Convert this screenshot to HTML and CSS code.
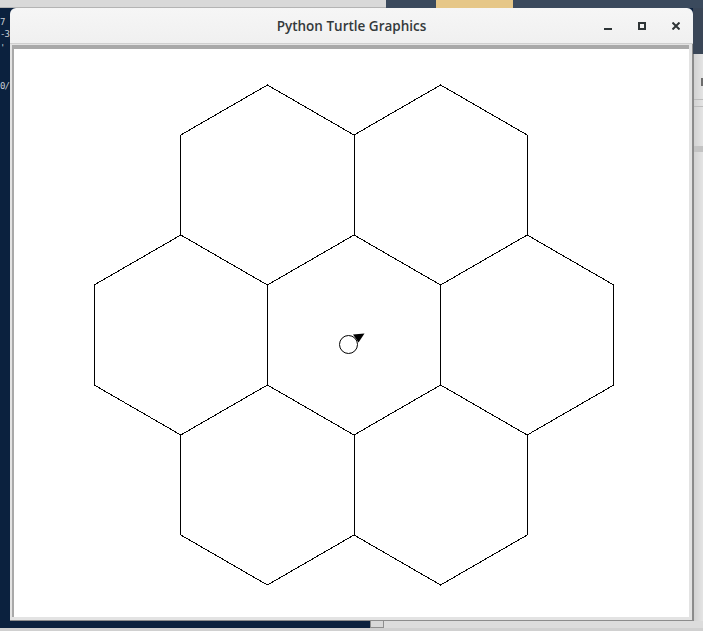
FILE: index.html
```html
<!DOCTYPE html>
<html>
<head>
<meta charset="utf-8">
<title>Python Turtle Graphics</title>
<link rel="stylesheet" href="styles.css">
</head>
<body>
<div class="desktop">
  <div class="topbar">
    <div class="topbar-gray"></div>
    <div class="topbar-slate"></div>
    <div class="topbar-tab"></div>
    <div class="topbar-slate grow"></div>
  </div>
  <div class="terminal">
    <span class="frag f1">7</span>
    <span class="frag f2">-3</span>
    <span class="frag f3">'</span>
    <span class="frag f4">0/</span>
  </div>
  <div class="behind">
    <div class="behind-top"></div>
    <div class="behind-body">
      <div class="b-mark"></div>
      <div class="b-line l1"></div>
      <div class="b-line l2"></div>
      <div class="b-band"></div>
    </div>
  </div>
  <div class="bottom-strip">
    <div class="bottom-navy"></div>
    <div class="bottom-btn"></div>
    <div class="bottom-rest"></div>
  </div>

  <div class="window">
    <div class="titlebar">
      <div class="tb-spacer"></div>
      <div class="tb-title">Python Turtle Graphics</div>
      <div class="tb-buttons">
        <div class="tb-btn">
          <svg width="8" height="8" viewBox="0 0 8 8"><rect x="0" y="6" width="8" height="2" fill="#2e3436"/></svg>
        </div>
        <div class="tb-btn">
          <svg width="8" height="8" viewBox="0 0 8 8"><rect x="1" y="1" width="6" height="6" fill="none" stroke="#2e3436" stroke-width="2"/></svg>
        </div>
        <div class="tb-btn">
          <svg width="8" height="8" viewBox="0 0 8 8"><path d="M0.5 0.5 L7.5 7.5 M7.5 0.5 L0.5 7.5" stroke="#2e3436" stroke-width="2" fill="none"/></svg>
        </div>
      </div>
    </div>
    <div class="win-body">
      <div class="canvas-wrap">
        <svg class="canvas" width="675" height="568" viewBox="0 0 675 568" shape-rendering="crispEdges">
          <g fill="none" stroke="#000" stroke-width="1">
            <polygon points="340,186 426.6,236 426.6,336 340,386 253.4,336 253.4,236"/>
            <polygon points="253.4,36 340,86 340,186 253.4,236 166.8,186 166.8,86"/>
            <polygon points="426.6,36 513.2,86 513.2,186 426.6,236 340,186 340,86"/>
            <polygon points="166.8,186 253.4,236 253.4,336 166.8,386 80.2,336 80.2,236"/>
            <polygon points="513.2,186 599.8,236 599.8,336 513.2,386 426.6,336 426.6,236"/>
            <polygon points="253.4,336 340,386 340,486 253.4,536 166.8,486 166.8,386"/>
            <polygon points="426.6,336 513.2,386 513.2,486 426.6,536 340,486 340,386"/>
          </g>
          <g shape-rendering="auto">
            <circle cx="334.5" cy="295.5" r="9" fill="#fff" stroke="#000" stroke-width="1"/>
            <polygon points="339,285.5 350.5,284.5 344.5,293.5" fill="#000"/>
          </g>
        </svg>
      </div>
    </div>
  </div>
</div>
</body>
</html>
```

FILE: styles.css
```css
html, body {
  margin: 0;
  padding: 0;
  background: #0c2240;
}

.desktop {
  position: relative;
  width: 703px;
  height: 631px;
  overflow: hidden;
  background: #0c2240;
  font-family: "Noto Sans", "DejaVu Sans", sans-serif;
}

.topbar {
  position: absolute;
  left: 0;
  top: 0;
  width: 703px;
  height: 8px;
  display: flex;
}

.topbar-gray {
  width: 386px;
  background: #d9d9d9;
  border-bottom: 1px solid #b4b4b4;
  box-sizing: border-box;
}

.topbar-slate {
  width: 50px;
  background: #3b4a5d;
}

.topbar-slate.grow {
  flex: 1;
}

.topbar-tab {
  width: 77px;
  background: #e6c788;
}

.terminal {
  position: absolute;
  left: 0;
  top: 8px;
  width: 10px;
  height: 613px;
  background: #0b213e;
  overflow: hidden;
}

.frag {
  position: absolute;
  left: 0;
  font-family: "DejaVu Sans Mono", monospace;
  font-size: 9px;
  line-height: 9px;
  letter-spacing: -1px;
  color: #c9ced6;
}

.f1 { top: 10px; }
.f2 { top: 22px; }
.f3 { top: 36px; }
.f4 { top: 74px; }

.behind {
  position: absolute;
  left: 693px;
  top: 8px;
  width: 10px;
  height: 623px;
  display: flex;
  flex-direction: column;
}

.behind-top {
  height: 46px;
  background: #3a4657;
}

.behind-body {
  position: relative;
  flex: 1;
  background: linear-gradient(to right, #8a8a8a 0, #8a8a8a 1px, #d2d2d2 1px, #e4e4e4 100%);
}

.b-mark {
  position: absolute;
  left: 8px;
  top: 24px;
  width: 4px;
  height: 8px;
  background: #6c6c6c;
}

.b-line {
  position: absolute;
  left: 1px;
  right: 0;
  height: 1px;
  background: #bdbdbd;
}

.l1 { top: 45px; }
.l2 { top: 52px; }

.b-band {
  position: absolute;
  left: 1px;
  right: 0;
  top: 92px;
  height: 6px;
  background: #c3c3c3;
}

.bottom-strip {
  position: absolute;
  left: 0;
  top: 621px;
  width: 703px;
  height: 10px;
  display: flex;
  background: #d0d0d0;
}

.bottom-navy {
  width: 370px;
  height: 7px;
  background: #0b213e;
}

.bottom-btn {
  width: 14px;
  height: 7px;
  background: #d8d8d8;
  border: 1px solid #8e8e8e;
  border-top: none;
  box-sizing: border-box;
}

.bottom-rest {
  flex: 1;
  height: 7px;
  background: #dcdcdc;
}

.window {
  position: absolute;
  left: 10px;
  top: 8px;
  width: 683px;
  height: 613px;
  display: flex;
  flex-direction: column;
  border-radius: 6px 6px 0 0;
  overflow: hidden;
  box-sizing: border-box;
}

.titlebar {
  height: 36px;
  box-sizing: border-box;
  display: grid;
  grid-template-columns: 1fr auto 1fr;
  align-items: center;
  background: linear-gradient(to bottom, #f6f6f6, #f0f0f0);
  border-bottom: 1px solid #cfcfcf;
}

.tb-title {
  font-family: "Open Sans", "Noto Sans", sans-serif;
  font-weight: 600;
  font-size: 13.5px;
  color: #33393b;
  padding-top: 1px;
}

.tb-buttons {
  display: flex;
  justify-content: flex-end;
}

.tb-btn {
  width: 34px;
  height: 34px;
  display: flex;
  align-items: center;
  justify-content: center;
}

.tb-btn svg {
  display: block;
}

.win-body {
  flex: 1;
  background: #e3e3e3;
  padding: 1px 3px 3px 2px;
  border-right: 1px solid #8c8c8c;
  border-bottom: 1px solid #8c8c8c;
  box-sizing: border-box;
  display: flex;
}

.canvas-wrap {
  flex: 1;
  border-top: 4px solid #a9a9a9;
  border-left: 2px solid #a9a9a9;
  background: #fff;
  display: flex;
}

.canvas {
  display: block;
  background: #fff;
}
```
